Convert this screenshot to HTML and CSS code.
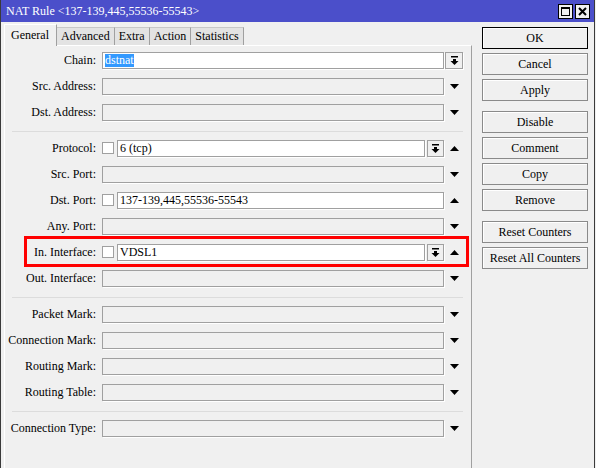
FILE: index.html
```html
<!DOCTYPE html>
<html lang="en">
<head>
    <meta charset="UTF-8">
    <title>NAT Rule</title>
    <link rel="stylesheet" href="styles.css">
</head>
<body>
    <div class="window">
        <div class="titlebar">
            <span class="title">NAT Rule &lt;137-139,445,55536-55543&gt;</span>
            <div class="title-buttons">
                <span class="tbtn">
                    <svg width="9" height="9" viewBox="0 0 9 9"><rect x="0.5" y="0.5" width="8" height="8" fill="none" stroke="#000"/><rect x="0" y="0" width="9" height="2" fill="#000"/></svg>
                </span>
                <span class="tbtn">
                    <svg width="9" height="9" viewBox="0 0 9 9"><path d="M1 1 L8 8 M8 1 L1 8" stroke="#000" stroke-width="2"/></svg>
                </span>
            </div>
        </div>

        <div class="content">
            <div class="main">
                <div class="tabs">
                    <div class="tab active">General</div>
                    <div class="tab">Advanced</div>
                    <div class="tab">Extra</div>
                    <div class="tab">Action</div>
                    <div class="tab">Statistics</div>
                </div>

                <div class="panel">
                    <div class="row">
                        <span class="label">Chain:</span>
                        <div class="control"><div class="field white"><span class="sel">dstnat</span></div></div>
                        <div class="cell"><span class="combo wide"><svg width="9" height="10" viewBox="0 0 9 10"><rect x="1" y="0" width="7" height="1.5"/><rect x="3" y="3" width="3" height="2"/><polygon points="0.5,5 8.5,5 4.5,9"/></svg></span></div>
                    </div>
                    <div class="row">
                        <span class="label">Src. Address:</span>
                        <div class="control"><div class="field"></div></div>
                        <div class="cell"><svg class="arrow" width="9" height="5" viewBox="0 0 9 5"><polygon points="0,0 9,0 4.5,5"/></svg></div>
                    </div>
                    <div class="row">
                        <span class="label">Dst. Address:</span>
                        <div class="control"><div class="field"></div></div>
                        <div class="cell"><svg class="arrow" width="9" height="5" viewBox="0 0 9 5"><polygon points="0,0 9,0 4.5,5"/></svg></div>
                    </div>

                    <div class="separator"></div>

                    <div class="row">
                        <span class="label">Protocol:</span>
                        <div class="control">
                            <span class="check"></span>
                            <div class="field white">6 (tcp)</div>
                            <span class="combo"><svg width="9" height="10" viewBox="0 0 9 10"><rect x="1" y="0" width="7" height="1.5"/><rect x="3" y="3" width="3" height="2"/><polygon points="0.5,5 8.5,5 4.5,9"/></svg></span>
                        </div>
                        <div class="cell"><svg class="arrow" width="9" height="5" viewBox="0 0 9 5"><polygon points="0,5 9,5 4.5,0"/></svg></div>
                    </div>
                    <div class="row">
                        <span class="label">Src. Port:</span>
                        <div class="control"><div class="field"></div></div>
                        <div class="cell"><svg class="arrow" width="9" height="5" viewBox="0 0 9 5"><polygon points="0,0 9,0 4.5,5"/></svg></div>
                    </div>
                    <div class="row">
                        <span class="label">Dst. Port:</span>
                        <div class="control">
                            <span class="check"></span>
                            <div class="field white">137-139,445,55536-55543</div>
                        </div>
                        <div class="cell"><svg class="arrow" width="9" height="5" viewBox="0 0 9 5"><polygon points="0,5 9,5 4.5,0"/></svg></div>
                    </div>
                    <div class="row">
                        <span class="label">Any. Port:</span>
                        <div class="control"><div class="field"></div></div>
                        <div class="cell"><svg class="arrow" width="9" height="5" viewBox="0 0 9 5"><polygon points="0,0 9,0 4.5,5"/></svg></div>
                    </div>
                    <div class="row highlight">
                        <span class="label">In. Interface:</span>
                        <div class="control">
                            <span class="check"></span>
                            <div class="field white">VDSL1</div>
                            <span class="combo"><svg width="9" height="10" viewBox="0 0 9 10"><rect x="1" y="0" width="7" height="1.5"/><rect x="3" y="3" width="3" height="2"/><polygon points="0.5,5 8.5,5 4.5,9"/></svg></span>
                        </div>
                        <div class="cell"><svg class="arrow" width="9" height="5" viewBox="0 0 9 5"><polygon points="0,5 9,5 4.5,0"/></svg></div>
                    </div>
                    <div class="row">
                        <span class="label">Out. Interface:</span>
                        <div class="control"><div class="field"></div></div>
                        <div class="cell"><svg class="arrow" width="9" height="5" viewBox="0 0 9 5"><polygon points="0,0 9,0 4.5,5"/></svg></div>
                    </div>

                    <div class="separator"></div>

                    <div class="row">
                        <span class="label">Packet Mark:</span>
                        <div class="control"><div class="field"></div></div>
                        <div class="cell"><svg class="arrow" width="9" height="5" viewBox="0 0 9 5"><polygon points="0,0 9,0 4.5,5"/></svg></div>
                    </div>
                    <div class="row">
                        <span class="label">Connection Mark:</span>
                        <div class="control"><div class="field"></div></div>
                        <div class="cell"><svg class="arrow" width="9" height="5" viewBox="0 0 9 5"><polygon points="0,0 9,0 4.5,5"/></svg></div>
                    </div>
                    <div class="row">
                        <span class="label">Routing Mark:</span>
                        <div class="control"><div class="field"></div></div>
                        <div class="cell"><svg class="arrow" width="9" height="5" viewBox="0 0 9 5"><polygon points="0,0 9,0 4.5,5"/></svg></div>
                    </div>
                    <div class="row">
                        <span class="label">Routing Table:</span>
                        <div class="control"><div class="field"></div></div>
                        <div class="cell"><svg class="arrow" width="9" height="5" viewBox="0 0 9 5"><polygon points="0,0 9,0 4.5,5"/></svg></div>
                    </div>

                    <div class="separator"></div>

                    <div class="row">
                        <span class="label">Connection Type:</span>
                        <div class="control"><div class="field"></div></div>
                        <div class="cell"><svg class="arrow" width="9" height="5" viewBox="0 0 9 5"><polygon points="0,0 9,0 4.5,5"/></svg></div>
                    </div>
                </div>
            </div>

            <div class="side">
                <button type="button" class="btn default">OK</button>
                <button type="button" class="btn">Cancel</button>
                <button type="button" class="btn">Apply</button>
                <button type="button" class="btn group">Disable</button>
                <button type="button" class="btn">Comment</button>
                <button type="button" class="btn">Copy</button>
                <button type="button" class="btn">Remove</button>
                <button type="button" class="btn group">Reset Counters</button>
                <button type="button" class="btn">Reset All Counters</button>
            </div>
        </div>
    </div>
</body>
</html>
```

FILE: styles.css
```css
html {
    background-color: #f0f0f0;
}

body {
    margin: 0;
    font-family: "Liberation Serif", "Times New Roman", serif;
    font-size: 12px;
    color: #000;
}

.window {
    width: 595px;
    height: 468px;
    box-sizing: border-box;
    border-left: 1px solid #3a3a3a;
    border-right: 1px solid #3a3a3a;
    background-color: #f0f0f0;
    overflow: hidden;
}

/* 標題列 */
.titlebar {
    height: 22px;
    background-color: #4b4fca;
    display: flex;
    align-items: center;
    justify-content: space-between;
    padding: 0 4px 0 5px;
}

.title {
    color: #fff;
    font-size: 12px;
    line-height: 22px;
    white-space: nowrap;
}

.title-buttons {
    display: flex;
    gap: 2px;
}

.tbtn {
    width: 15px;
    height: 15px;
    box-sizing: border-box;
    border: 1px solid #000;
    background-color: #f0f0f0;
    display: flex;
    align-items: center;
    justify-content: center;
}

.content {
    display: flex;
    padding-left: 3px;
}

.main {
    width: 468px;
    padding-top: 2px;
}

/* 分頁 */
.tabs {
    display: flex;
    align-items: flex-end;
    height: 21px;
    position: relative;
    z-index: 1;
}

.tab {
    height: 18px;
    box-sizing: border-box;
    line-height: 17px;
    padding: 0 4px;
    background-color: #e3e3e3;
    border-top: 1px solid #c8c8c8;
    border-right: 1px solid #a0a0a0;
}

.tab.active {
    height: 22px;
    margin-bottom: -1px;
    line-height: 20px;
    padding: 0 7px 0 6px;
    background-color: #f0f0f0;
    border-top: 1px solid #fff;
    border-left: 1px solid #fff;
    border-right: 1px solid #a0a0a0;
}

.panel {
    height: 430px;
    box-sizing: border-box;
    border-top: 1px solid #fff;
    border-left: 1px solid #fff;
    border-right: 1px solid #a0a0a0;
    padding: 6px 8px 0 7px;
}

/* 表單列 */
.row {
    display: flex;
    height: 26px;
    align-items: flex-start;
}

.label {
    width: 84px;
    flex-shrink: 0;
    margin-right: 6px;
    display: flex;
    justify-content: flex-end;
    white-space: nowrap;
    line-height: 17px;
}

.control {
    width: 342px;
    display: flex;
}

.field {
    flex: 1;
    height: 17px;
    box-sizing: border-box;
    border: 1px solid #a0a0a0;
    box-shadow: 1px 1px 0 #fff;
    background-color: #f0f0f0;
    line-height: 15px;
    padding-left: 2px;
    white-space: nowrap;
    overflow: hidden;
}

.field.white {
    background-color: #fff;
}

.sel {
    background-color: #3399ff;
    color: #fff;
    display: inline-block;
    line-height: 13px;
    margin-top: 1px;
}

.check {
    width: 12px;
    height: 12px;
    box-sizing: border-box;
    border: 1px solid #a0a0a0;
    background-color: #fff;
    margin: 2px 3px 0 0;
}

.combo {
    width: 17px;
    height: 17px;
    box-sizing: border-box;
    border: 1px solid #a0a0a0;
    box-shadow: 1px 1px 0 #fff;
    margin-left: 2px;
    display: flex;
    align-items: center;
    justify-content: center;
}

.combo.wide {
    width: 18px;
    margin-left: 0;
}

.cell {
    width: 18px;
    height: 17px;
    margin-left: 1px;
    display: flex;
    align-items: center;
    justify-content: center;
}

.arrow {
    margin-left: 1px;
}

.separator {
    height: 1px;
    background-color: #dcdcdc;
    margin: 1px 0 8px;
}

/* 紅框標示 */
.highlight {
    position: relative;
}

.highlight::after {
    content: "";
    position: absolute;
    left: 12px;
    right: -6px;
    top: -8px;
    bottom: 3px;
    border: 3px solid #ff0000;
    pointer-events: none;
}

/* 右側按鈕 */
.side {
    width: 106px;
    margin-left: 10px;
    padding-top: 5px;
    display: flex;
    flex-direction: column;
    gap: 4px;
}

.btn {
    height: 22px;
    margin: 0;
    padding: 0;
    font-family: "Liberation Serif", "Times New Roman", serif;
    font-size: 12px;
    color: #000;
    background-color: #f0f0f0;
    border: 1px solid #8a8a8a;
    box-shadow: inset 1px 1px 0 #fff;
    border-radius: 0;
}

.btn.default {
    border-color: #000;
}

.btn.group {
    margin-top: 6px;
}
```
